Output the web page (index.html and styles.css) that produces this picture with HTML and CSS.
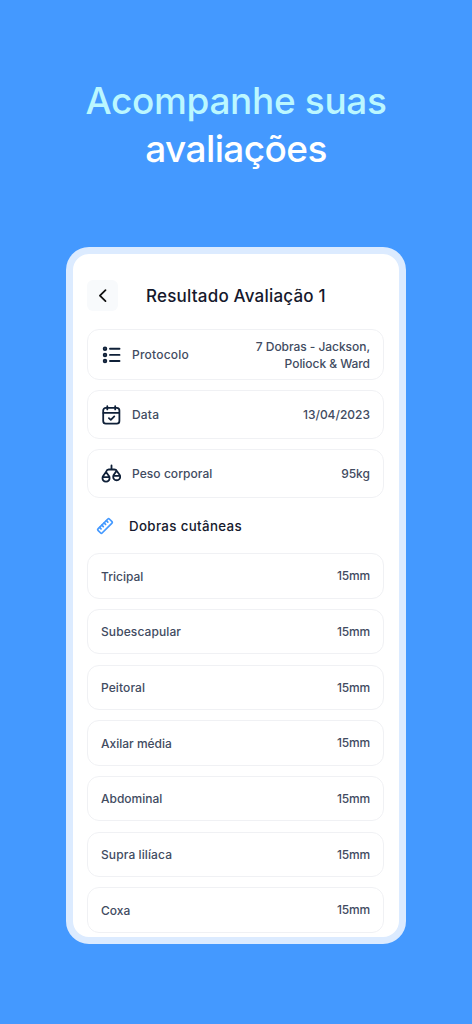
FILE: index.html
```html
<!DOCTYPE html>
<html lang="pt-BR">
<head>
<meta charset="utf-8">
<title>Acompanhe suas avaliações</title>
<link rel="stylesheet" href="styles.css">
</head>
<body>
<h1 class="headline"><span class="headline-accent">Acompanhe suas</span><span class="headline-main">avaliações</span></h1>
<main class="phone">
  <header class="topbar">
    <button class="back" aria-label="Voltar"><svg width="31" height="31" viewBox="0 0 31 31"><path d="M18.5 10.2 12.9 15.6l5.6 5.5" fill="none" stroke="#111" stroke-width="1.8" stroke-linecap="round" stroke-linejoin="round"/></svg></button>
    <h2 class="title">Resultado Avaliação 1</h2>
  </header>
  <section class="summary">
    <div class="card card-tall">
      <svg class="icon" viewBox="0 0 20 20"><g fill="none" stroke="#0f2038" stroke-width="1.9" stroke-linecap="round"><circle cx="4" cy="3.8" r="1.3"/><circle cx="4" cy="9.9" r="1.3"/><circle cx="4" cy="16" r="1.3"/><path d="M9 3.8h9.5M9 9.9h9.5M9 16h9.5"/></g></svg>
      <span class="label protocol">Protocolo</span>
      <span class="value method">7 Dobras - Jackson,<br>Poliock &amp; Ward</span>
    </div>
    <div class="card">
      <svg class="icon" viewBox="0 0 20 20"><g fill="none" stroke="#0f2038" stroke-width="1.8" stroke-linecap="round" stroke-linejoin="round"><rect x="2.2" y="2.8" width="16.2" height="15.9" rx="2.6"/><path d="M2.4 7.9h15.8M6.3 1.2v3.2M14.2 1.2v3.2M7.9 13.1l1.9 1.7 3.5-3.4"/></g></svg>
      <span class="label data">Data</span>
      <span class="value date">13/04/2023</span>
    </div>
    <div class="card">
      <svg class="icon" viewBox="0 0 20 20"><g fill="none" stroke="#0f2038" stroke-width="1.8" stroke-linecap="round" stroke-linejoin="round"><path d="M10.5 1.5v3.9M5.2 7.5q.7-2 2.5-2h5.5q2.2 0 2.4 1.1M5 7.9 1.8 12.6c-2.1 6.6 8.5 6.6 6.5 0ZM1.8 13.2h6.5M15.6 6.7l-3.1 4.6c-2.1 6.6 8.4 6.6 6.4 0ZM12.5 11.9h6.4"/></g></svg>
      <span class="label weight">Peso corporal</span>
      <span class="value kilos">95kg</span>
    </div>
  </section>
  <h3 class="section-title"><svg class="ruler" width="18" height="18" viewBox="0 0 18 18"><g transform="rotate(-45 9 9)" fill="none" stroke="#4499ff" stroke-width="1.7" stroke-linecap="round" stroke-linejoin="round"><rect x="1" y="6.1" width="16" height="5.8" rx="1"/><path d="M4.2 6.2v2M7.4 6.2v2M10.6 6.2v2M13.8 6.2v2"/></g></svg><span>Dobras cutâneas</span></h3>
  <section class="folds">
    <div class="card"><span class="label">Tricipal</span><span class="value mm">15mm</span></div>
    <div class="card"><span class="label spaced">Subescapular</span><span class="value mm">15mm</span></div>
    <div class="card"><span class="label spaced">Peitoral</span><span class="value mm">15mm</span></div>
    <div class="card"><span class="label">Axilar média</span><span class="value mm">15mm</span></div>
    <div class="card"><span class="label">Abdominal</span><span class="value mm">15mm</span></div>
    <div class="card"><span class="label spaced">Supra lilíaca</span><span class="value mm">15mm</span></div>
    <div class="card"><span class="label">Coxa</span><span class="value mm">15mm</span></div>
  </section>
</main>
</body>
</html>
```
FILE: styles.css
```css
* { box-sizing: border-box; margin: 0; }
body { height: 1024px; overflow: hidden; background: #4499ff; font-family: Inter, sans-serif; padding-top: 77px; }
.headline { font-size: 37px; line-height: 48px; font-weight: 500; text-align: center; }
.headline span { display: block; }
.headline-accent { color: #bbf7ff; letter-spacing: -0.35px; }
.headline-main { color: #fff; letter-spacing: -0.6px; }
.phone { width: 339.5px; height: 696.4px; margin: 74.4px 0 0 66px; border: 7px solid #dcebff; border-radius: 23px; background: #fff; overflow: hidden; padding: 25.8px 14.5px 0 14px; }
.topbar { display: flex; align-items: center; height: 31px; }
.back { width: 31px; height: 31px; padding: 0; border: 0; border-radius: 6px; background: #f8fafc; }
.back svg { display: block; }
.title { margin-left: 28px; padding-top: 1px; font-size: 17px; letter-spacing: 0.21px; font-weight: 500; color: #15182c; white-space: nowrap; }
.summary { display: flex; flex-direction: column; gap: 10.3px; margin-top: 18.2px; }
.card { display: flex; align-items: center; height: 48.8px; border: 1px solid #f0f1f4; border-radius: 12px; padding: 0 13px; font-size: 12px; font-weight: 500; color: #414b61; white-space: nowrap; }
.card-tall { height: 50.6px; }
.icon { width: 20px; height: 20px; margin: 0 11px 0 0; }
.protocol { letter-spacing: 0.22px; }
.data { letter-spacing: 0.2px; }
.weight { letter-spacing: 0.06px; }
.spaced { letter-spacing: 0.1px; }
.value { margin-left: auto; text-align: right; line-height: 17.2px; }
.method { padding-top: 1px; letter-spacing: -0.05px; }
.mm { letter-spacing: -0.15px; }
.section-title { display: flex; align-items: center; height: 55.2px; padding-left: 8.5px; font-size: 13.3px; letter-spacing: 0.36px; font-weight: 500; color: #15182c; }
.ruler { margin-right: 15.5px; }
.folds { display: flex; flex-direction: column; gap: 10.2px; }
.folds .card { flex: none; height: 45.48px; }
```
